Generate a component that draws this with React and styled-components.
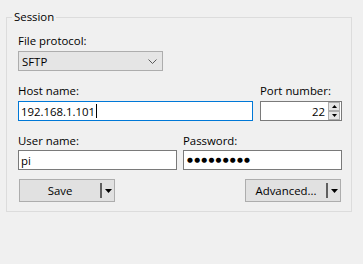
import React from 'react';
import styled, { createGlobalStyle } from 'styled-components';

const GlobalStyle = createGlobalStyle`
  html, body {
    margin: 0;
    padding: 0;
    background: #f0f0f0;
  }
  body {
    width: 363px;
    height: 264px;
    overflow: hidden;
    font-family: "Open Sans", "Noto Sans", sans-serif;
    font-size: 11.4px;
    color: #000;
  }
`;

const Page = styled.div`
  padding: 10px 11px 0 6px;
`;

const GroupBox = styled.fieldset`
  margin: 0;
  width: 346px;
  box-sizing: border-box;
  border: 1px solid #dcdcdc;
  padding: 9px 9px 9px 11px;
  display: flex;
  flex-direction: column;
`;

const Legend = styled.legend`
  margin-left: -6px;
  padding: 0 2px;
  line-height: 14px;
`;

const Group = styled.div`
  display: flex;
  flex-direction: column;
  gap: ${p => p.$gap || 2}px;
  margin-top: ${p => p.$top || 0}px;
  width: ${p => (p.$width ? `${p.$width}px` : 'auto')};
  flex: ${p => (p.$grow ? 1 : 'none')};
`;

const Row = styled.div`
  display: flex;
  gap: ${p => p.$gap || 0}px;
  margin-top: ${p => p.$top || 0}px;
`;

const Label = styled.label`
  line-height: 16px;
  white-space: nowrap;
`;

const Select = styled.div`
  width: 145px;
  height: 20px;
  box-sizing: border-box;
  border: 1px solid #adadad;
  background: #e5e5e5;
  display: flex;
  align-items: center;
  justify-content: space-between;
  padding: 0 5px 0 3px;
`;

const Field = styled.div`
  height: 20px;
  box-sizing: border-box;
  border: 1px solid ${p => (p.$focused ? '#0078d7' : '#7a7a7a')};
  background: #fff;
  display: flex;
  align-items: center;
  justify-content: ${p => (p.$right ? 'flex-end' : 'flex-start')};
  padding: 0 ${p => (p.$right ? 1 : 2)}px 0 2px;
  white-space: nowrap;
`;

const Caret = styled.span`
  display: inline-block;
  width: 1px;
  height: 14px;
  background: #000;
  margin-left: 1px;
`;

const Dots = styled.span`
  font-family: "DejaVu Sans", sans-serif;
  font-size: 6.8px;
  letter-spacing: 1.2px;
  padding-left: 1px;
`;

const Spin = styled.div`
  display: flex;
  flex-direction: column;
  margin-left: 3px;
`;

const SpinButton = styled.div`
  width: 12px;
  height: 9px;
  box-sizing: border-box;
  border: 1px solid #adadad;
  background: #e5e5e5;
  display: flex;
  align-items: center;
  justify-content: center;
`;

const ButtonRow = styled.div`
  display: flex;
  justify-content: space-between;
  padding: 0 1px;
  margin-top: 9px;
`;

const SplitButton = styled.div`
  width: 96px;
  height: 23px;
  box-sizing: border-box;
  border: 1px solid #adadad;
  background: #e1e1e1;
  display: flex;
  align-items: center;
`;

const ButtonText = styled.span`
  flex: 1;
  text-align: center;
  line-height: 16px;
`;

const Divider = styled.span`
  width: 2px;
  height: 15px;
  background: #5f5f5f;
`;

const ArrowPart = styled.span`
  width: 12px;
  display: flex;
  justify-content: center;
`;

const Chevron = () => (
  <svg width="9" height="5" viewBox="0 0 9 5">
    <path d="M0.5 0.5 L4.5 4.5 L8.5 0.5" fill="none" stroke="#5a5a5a" strokeWidth="1" />
  </svg>
);

const Tri = ({ up, w = 7, h = 4 }) => (
  <svg width={w} height={h} viewBox={`0 0 ${w} ${h}`}>
    <path d={up ? `M0 ${h} L${w / 2} 0 L${w} ${h} Z` : `M0 0 L${w} 0 L${w / 2} ${h} Z`} fill="#000" />
  </svg>
);

const Button = ({ children }) => (
  <SplitButton>
    <ButtonText>{children}</ButtonText>
    <Divider />
    <ArrowPart>
      <Tri />
    </ArrowPart>
  </SplitButton>
);

export default function App() {
  return (
    <Page>
      <GlobalStyle />
      <GroupBox>
        <Legend>Session</Legend>
        <Group>
          <Label>File protocol:</Label>
          <Select>
            <span>SFTP</span>
            <Chevron />
          </Select>
        </Group>
        <Row $gap={7} $top={12}>
          <Group $grow>
            <Label>Host name:</Label>
            <Field $focused>
              192.168.1.101
              <Caret />
            </Field>
          </Group>
          <Group $width={82}>
            <Label>Port number:</Label>
            <Field $right>
              22
              <Spin>
                <SpinButton><Tri up w={5} h={3} /></SpinButton>
                <SpinButton><Tri w={5} h={3} /></SpinButton>
              </Spin>
            </Field>
          </Group>
        </Row>
        <Row $gap={6} $top={12}>
          <Group $grow $gap={1}>
            <Label>User name:</Label>
            <Field>pi</Field>
          </Group>
          <Group $grow $gap={1}>
            <Label>Password:</Label>
            <Field>
              <Dots>●●●●●●●●●</Dots>
            </Field>
          </Group>
        </Row>
        <ButtonRow>
          <Button>Save</Button>
          <Button>Advanced...</Button>
        </ButtonRow>
      </GroupBox>
    </Page>
  );
}
